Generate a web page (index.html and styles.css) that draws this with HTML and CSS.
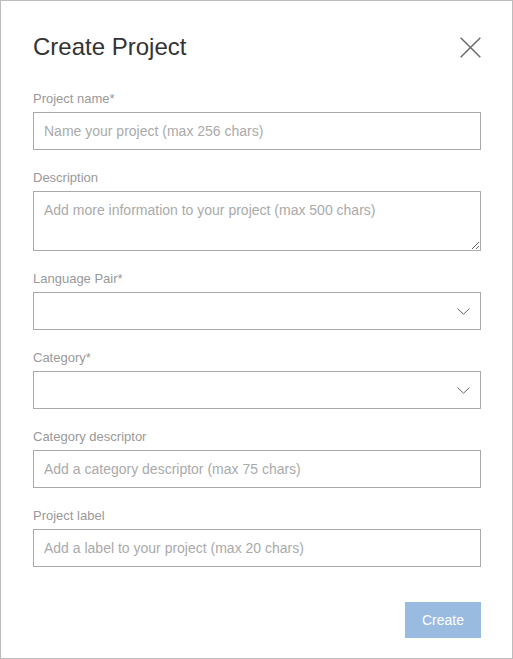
FILE: index.html
```
<!DOCTYPE html>
<html>
<head>
<meta charset="utf-8">
<link rel="stylesheet" href="styles.css">
</head>
<body>
<div class="dialog">
  <div class="header">
    <h1 class="title">Create Project</h1>
    <button class="close" aria-label="Close">
      <svg width="21" height="21" viewBox="0 0 21 21"><path d="M0.7 0.7 L20.3 20.3 M20.3 0.7 L0.7 20.3" stroke="#6b6b6b" stroke-width="1.5" fill="none"/></svg>
    </button>
  </div>
  <form class="form">
    <div class="field">
      <label class="label">Project name*</label>
      <input class="input" type="text" placeholder="Name your project (max 256 chars)">
    </div>
    <div class="field">
      <label class="label">Description</label>
      <textarea class="input textarea" placeholder="Add more information to your project (max 500 chars)"></textarea>
    </div>
    <div class="field">
      <label class="label">Language Pair*</label>
      <div class="select-wrap">
        <select class="input select"><option></option></select>
        <svg class="chevron" width="13" height="7" viewBox="0 0 13 7"><path d="M0.5 0.5 L6.5 6.2 L12.5 0.5" stroke="#666" stroke-width="1" fill="none"/></svg>
      </div>
    </div>
    <div class="field">
      <label class="label">Category*</label>
      <div class="select-wrap">
        <select class="input select"><option></option></select>
        <svg class="chevron" width="13" height="7" viewBox="0 0 13 7"><path d="M0.5 0.5 L6.5 6.2 L12.5 0.5" stroke="#666" stroke-width="1" fill="none"/></svg>
      </div>
    </div>
    <div class="field">
      <label class="label">Category descriptor</label>
      <input class="input" type="text" placeholder="Add a category descriptor (max 75 chars)">
    </div>
    <div class="field">
      <label class="label">Project label</label>
      <input class="input" type="text" placeholder="Add a label to your project (max 20 chars)">
    </div>
    <div class="actions">
      <button type="button" class="create">Create</button>
    </div>
  </form>
</div>
</body>
</html>
```
FILE: styles.css
```
* { box-sizing: border-box; }
html, body { margin: 0; padding: 0; background: #fff; }
body { font-family: "Liberation Sans", Arial, sans-serif; }
.dialog {
  width: 513px;
  height: 659px;
  border: 1px solid #bcbcbc;
  padding: 32px 31px 0 32px;
}
.header {
  display: flex;
  justify-content: space-between;
  align-items: flex-start;
  height: 28px;
}
.title {
  margin: 0;
  font-size: 24px;
  line-height: 28px;
  font-weight: normal;
  color: #333;
}
.close {
  border: 0;
  background: none;
  padding: 0;
  margin: 4px 0 0 0;
  width: 21px;
  height: 21px;
  display: block;
}
.close svg { display: block; }
.form {
  margin-top: 30px;
  display: flex;
  flex-direction: column;
  gap: 20px;
}
.field {
  display: flex;
  flex-direction: column;
  gap: 5px;
}
.label {
  font-size: 13px;
  line-height: 16px;
  color: #999;
}
.input {
  display: block;
  width: 100%;
  height: 38px;
  border: 1px solid #aaa;
  border-radius: 0;
  padding: 0 10px;
  font-family: "Liberation Sans", Arial, sans-serif;
  font-size: 14px;
  color: #333;
  background: #fff;
  margin: 0;
  outline: none;
}
.input::placeholder { color: #aaa; }
.textarea {
  height: 60px;
  padding: 9px 10px;
  line-height: 18px;
  resize: vertical;
}
.select-wrap { position: relative; }
.select {
  appearance: none;
  -webkit-appearance: none;
}
.chevron {
  position: absolute;
  right: 11px;
  top: 16px;
  pointer-events: none;
}
.actions {
  display: flex;
  justify-content: flex-end;
  margin-top: 15px;
}
.create {
  width: 76px;
  height: 36px;
  border: 0;
  border-radius: 0;
  background: #99bbdf;
  color: #fff;
  font-family: "Liberation Sans", Arial, sans-serif;
  font-size: 14px;
  padding: 0;
}
```
